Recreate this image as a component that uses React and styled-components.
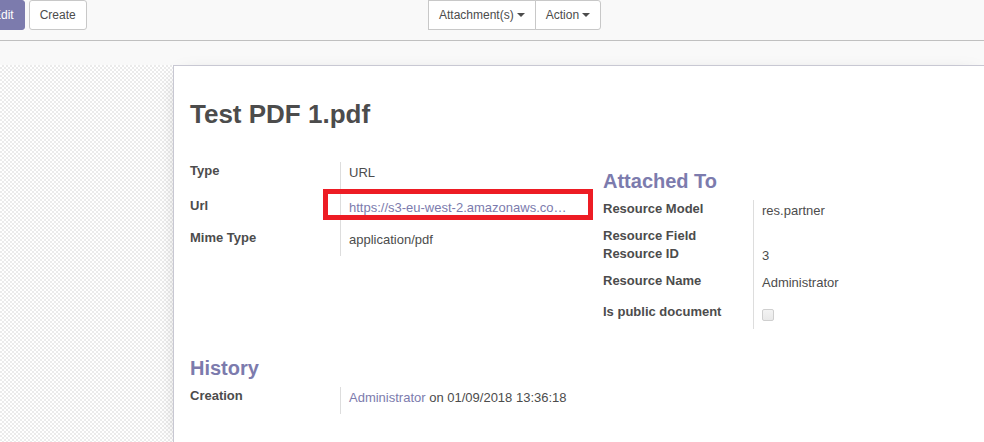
import React from "react";
import styled, { createGlobalStyle } from "styled-components";

const GlobalStyle = createGlobalStyle`
  *, *::before, *::after { box-sizing: border-box; }
  body {
    margin: 0;
    background: #f9f9f9;
    color: #4c4c4c;
    font-family: "Liberation Sans", Arial, sans-serif;
    font-size: 13px;
    line-height: 18px;
  }
`;

const Page = styled.div`
  display: flex;
  flex-direction: column;
  min-height: 100vh;
  overflow: hidden;
`;

const ControlPanel = styled.header`
  display: grid;
  grid-template-columns: 428px 1fr;
  height: 41px;
  border-bottom: 1px solid #c0c0c0;
`;

const Actions = styled.div`
  display: flex;
  align-items: flex-start;
  gap: 4px;
  margin-left: -18px;
`;

const ButtonGroup = styled.div`
  display: flex;
  align-items: flex-start;
`;

const Button = styled.button`
  display: flex;
  align-items: center;
  height: 30px;
  padding: 0 10px;
  border: 1px solid ${(p) => (p.$primary ? "#7c7bad" : "#c8c8c8")};
  border-radius: 3px;
  background: ${(p) => (p.$primary ? "#7c7bad" : "#fff")};
  color: ${(p) => (p.$primary ? "#fff" : "#4c4c4c")};
  font: 12px/18px "Liberation Sans", Arial, sans-serif;
  white-space: nowrap;
`;

const MenuButton = styled(Button)`
  gap: 3px;
  border-radius: 0;

  & + & {
    margin-left: -1px;
    border-radius: 0 3px 3px 0;
  }

  &::after {
    content: "";
    border-top: 4px solid currentColor;
    border-left: 4px solid transparent;
    border-right: 4px solid transparent;
  }
`;

const Content = styled.main`
  display: flex;
  flex: 1;
  margin-top: 24px;
  padding-left: 173px;
  background: repeating-conic-gradient(#ebebeb 0% 25%, #fff 0% 50%) 0 0 / 4px 4px;
`;

const Sheet = styled.section`
  flex: 1;
  min-width: 0;
  padding: 30px 0 28px 16px;
  border: solid #c8c8d3;
  border-width: 1px 0 0 1px;
  background: #fff;
  box-shadow: 0 5px 20px -10px rgba(0, 0, 0, 0.4);
`;

const Title = styled.h1`
  margin: 0 0 30px;
  font-size: 26px;
  line-height: 36px;
`;

const Columns = styled.div`
  display: grid;
  grid-template-columns: 1fr 1fr;
  column-gap: 32px;
  margin-bottom: 28px;
`;

const Group = styled.div`
  padding-top: ${(p) => (p.$offset ? "8px" : "0")};
`;

const GroupTitle = styled.h2`
  margin: 0 0 8px;
  color: #7c7bad;
  font-size: 20px;
  line-height: 22px;
`;

const Row = styled.div`
  display: grid;
  grid-template-columns: 150px 1fr;
  min-height: ${(p) => p.$height}px;
`;

const Label = styled.label`
  font-weight: bold;
`;

const Value = styled.div`
  position: relative;
  padding: 2px 0 0 8px;
  border-left: 1px solid #ddd;
  white-space: nowrap;
`;

const Link = styled.a`
  color: #7c7bad;
  text-decoration: none;
`;

const Highlight = styled.span`
  position: absolute;
  top: -8px;
  left: -18px;
  width: 270px;
  height: 31px;
  border: 5px solid #ed1c24;
  pointer-events: none;
`;

const Checkbox = styled.input`
  appearance: none;
  display: block;
  width: 12px;
  height: 12px;
  margin: 4px 0 0;
  border: 1px solid #cfcfcf;
  border-radius: 2px;
  background: linear-gradient(#f3f3f3, #e9e9e9);
`;

function Field({ id, label, height, children }) {
  return (
    <Row $height={height}>
      <Label htmlFor={id} as={id ? "label" : "span"}>{label}</Label>
      <Value>{children}</Value>
    </Row>
  );
}

export default function App() {
  return (
    <>
      <GlobalStyle />
      <Page>
        <ControlPanel>
          <Actions>
            <Button type="button" $primary>Edit</Button>
            <Button type="button">Create</Button>
          </Actions>
          <ButtonGroup>
            <MenuButton type="button">Attachment(s)</MenuButton>
            <MenuButton type="button">Action</MenuButton>
          </ButtonGroup>
        </ControlPanel>
        <Content>
          <Sheet>
            <Title>Test PDF 1.pdf</Title>
            <Columns>
              <Group>
                <Field label="Type" height={35}>URL</Field>
                <Field label="Url" height={32}>
                  <Link href="#url">https://s3-eu-west-2.amazonaws.co…</Link>
                  <Highlight />
                </Field>
                <Field label="Mime Type" height={27}>application/pdf</Field>
              </Group>
              <Group $offset>
                <GroupTitle>Attached To</GroupTitle>
                <Field label="Resource Model" height={27}>res.partner</Field>
                <Field label="Resource Field" height={18} />
                <Field label="Resource ID" height={27}>3</Field>
                <Field label="Resource Name" height={31}>Administrator</Field>
                <Field label="Is public document" id="public" height={26}>
                  <Checkbox id="public" type="checkbox" />
                </Field>
              </Group>
            </Columns>
            <Group>
              <GroupTitle>History</GroupTitle>
              <Field label="Creation" height={27}>
                <Link href="#administrator">Administrator</Link> on 01/09/2018 13:36:18
              </Field>
            </Group>
          </Sheet>
        </Content>
      </Page>
    </>
  );
}
